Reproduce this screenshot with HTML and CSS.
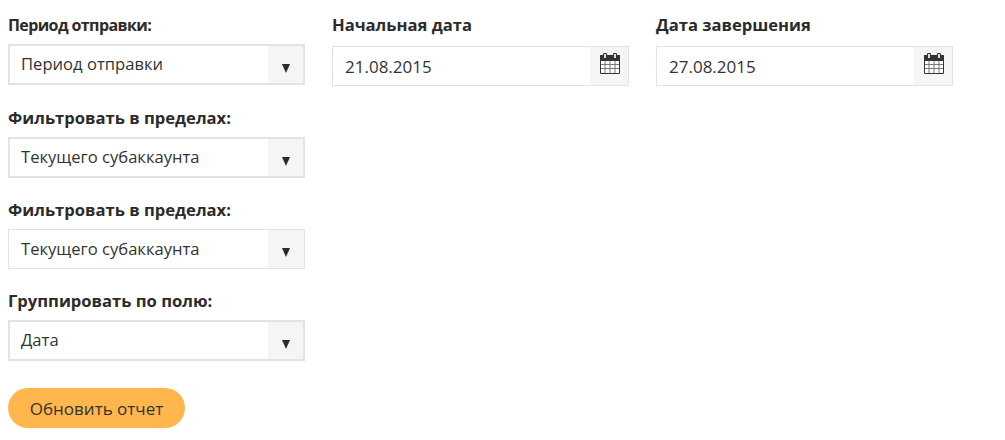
FILE: index.html
```html
<!DOCTYPE html>
<html lang="en">
  <head>
    <meta charset="UTF-8" />
    <meta name="viewport" content="width=device-width, initial-scale=1" />
    <title>Отчет</title>
    <link rel="stylesheet" href="styles.css">
  </head>

  <body>
    <div class="report-form">
      <div class="column">
        <div class="field field-first">
          <label class="label-first">Период отправки:</label>
          <div class="select-box"><span>Период отправки</span><i class="arrow-cell"><b class="arrow"></b></i></div>
        </div>
        <div class="field">
          <label>Фильтровать в пределах:</label>
          <div class="select-box"><span>Текущего субаккаунта</span><i class="arrow-cell"><b class="arrow"></b></i></div>
        </div>
        <div class="field">
          <label>Фильтровать в пределах:</label>
          <div class="select-box select-thin"><span>Текущего субаккаунта</span><i class="arrow-cell"><b class="arrow"></b></i></div>
        </div>
        <div class="field">
          <label>Группировать по полю:</label>
          <div class="select-box"><span>Дата</span><i class="arrow-cell"><b class="arrow"></b></i></div>
        </div>
        <button class="update-button">Обновить отчет</button>
      </div>

      <div class="column">
        <div class="field">
          <label>Начальная дата</label>
          <div class="date-box">
            <span>21.08.2015</span>
            <i class="calendar-cell">
              <svg width="20" height="21" viewBox="0 0 20 21"><use href="#calendar" /></svg>
            </i>
          </div>
        </div>
      </div>

      <div class="column">
        <div class="field">
          <label>Дата завершения</label>
          <div class="date-box">
            <span>27.08.2015</span>
            <i class="calendar-cell">
              <svg width="20" height="21" viewBox="0 0 20 21"><use href="#calendar" /></svg>
            </i>
          </div>
        </div>
      </div>
    </div>

    <!-- Calendar icon -->
    <svg class="icon-defs" width="0" height="0">
      <symbol id="calendar" viewBox="0 0 20 21">
        <path d="M.5 3.5h19v17H.5z" fill="#fff" stroke="#333" />
        <path d="M0 2h20v6H0z" fill="#333" />
        <path d="M5 8v12M10 8v12M15 8v12M1 11.5h18M1 15.5h18" stroke="#777" fill="none" />
        <path d="M3.5.5h3v5h-3zM13.5.5h3v5h-3z" fill="#ddd" stroke="#333" />
      </symbol>
    </svg>
  </body>
</html>
```

FILE: styles.css
```css
/* Global Styles */
body {
  font-family: 'Open Sans', 'Noto Sans', sans-serif;
  margin: 0;
  padding: 0;
  background-color: #fff;
  color: #2b2b2b;
  font-size: 16.6px;
}

.report-form {
  display: flex;
  gap: 27px;
  padding: 15px 8px 0;
}

.column {
  width: 297px;
}

.field {
  margin-bottom: 22px;
}

.field-first {
  margin-bottom: 23px;
}

.field label {
  display: block;
  font-weight: 700;
  line-height: 20px;
  margin-bottom: 9px;
}

.field .label-first {
  font-size: 16px;
  letter-spacing: -0.6px;
}

/* Select boxes */
.select-box {
  display: flex;
  justify-content: space-between;
  height: 41px;
  box-sizing: border-box;
  border: 2px solid #e3e3e3;
  color: #333;
}

.select-box span {
  padding-left: 11px;
  line-height: 36px;
}

.select-thin {
  height: 40px;
  border-width: 1px;
}

.select-thin span {
  padding-left: 12px;
  line-height: 37px;
}

.arrow-cell {
  display: flex;
  align-items: center;
  justify-content: center;
  width: 35px;
  padding-top: 7px;
  box-sizing: border-box;
  background-color: #f5f5f5;
}

.select-thin .arrow-cell {
  width: 36px;
}

.arrow {
  width: 0;
  height: 0;
  border-left: 4.5px solid transparent;
  border-right: 4.5px solid transparent;
  border-top: 9px solid #2b2b2b;
}

/* Date boxes */
.date-box {
  display: flex;
  justify-content: space-between;
  height: 40px;
  margin-top: 11px;
  box-sizing: border-box;
  border: 1px solid #e3e3e3;
  color: #333;
  font-size: 17px;
}

.date-box span {
  padding-left: 12px;
  line-height: 40px;
}

.calendar-cell {
  display: flex;
  align-items: center;
  justify-content: center;
  width: 38px;
  padding: 0 0 5px 2px;
  box-sizing: border-box;
  background-color: #f5f5f5;
}

.icon-defs {
  position: absolute;
}

/* Button */
.update-button {
  display: block;
  width: 177px;
  height: 40px;
  margin-top: 27px;
  border: none;
  border-radius: 20px;
  background-color: #ffb74d;
  color: #333;
  font-family: inherit;
  font-size: 17px;
}
```
